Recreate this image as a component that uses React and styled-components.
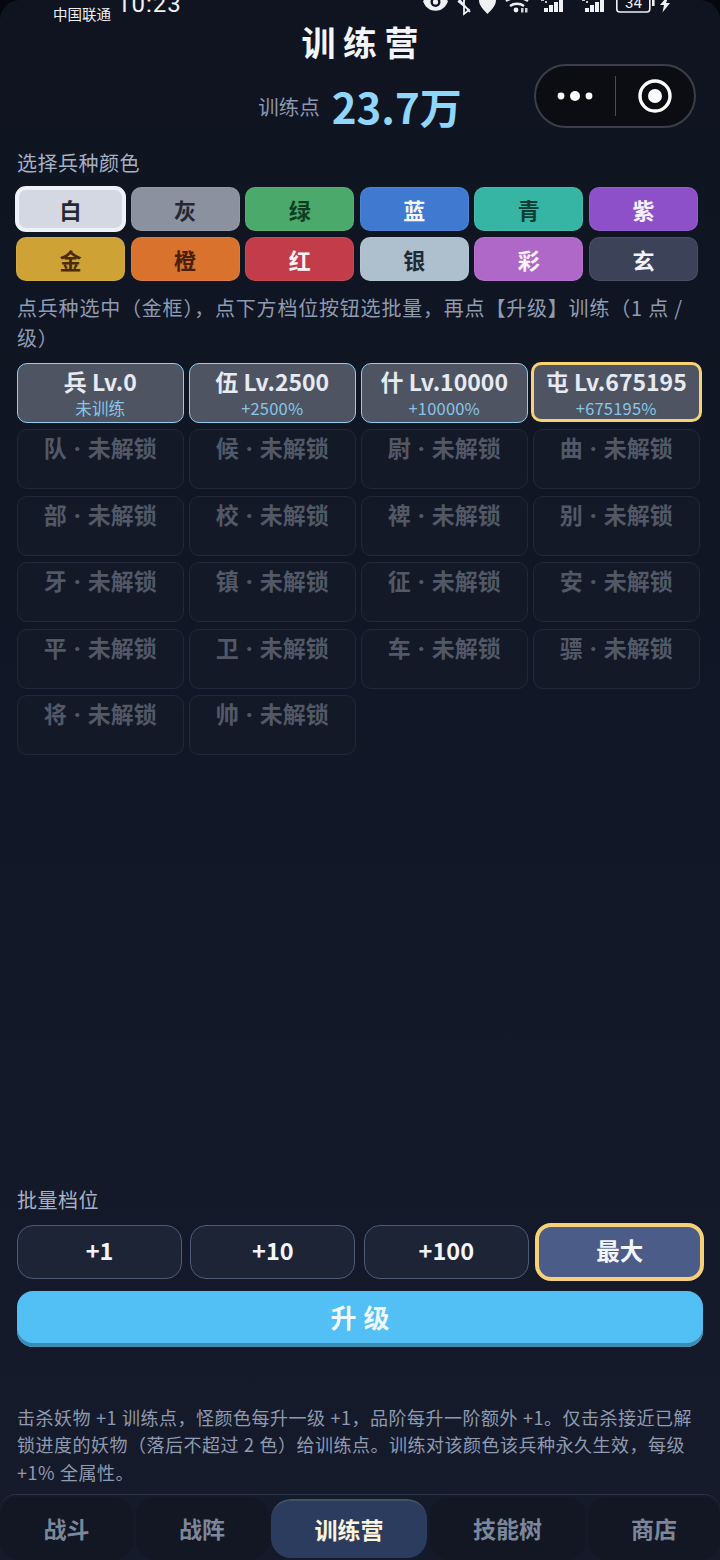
import React from 'react';
import styled, { createGlobalStyle } from 'styled-components';

const GlobalStyle = createGlobalStyle`
  html, body { margin: 0; padding: 0; background: #05070c; }
  * { box-sizing: border-box; }
  body {
    font-family: 'Noto Sans CJK SC', 'Noto Sans', sans-serif;
    text-spacing-trim: space-all;
  }
`;

const Page = styled.div`
  position: relative;
  width: 720px;
  height: 1560px;
  display: flex;
  flex-direction: column;
  overflow: hidden;
  border-radius: 20px 20px 0 0;
  background: linear-gradient(180deg, #0f1420 0%, #111726 50%, #161b2b 100%);
`;

const StatusBar = styled.div`
  height: 23px;
  flex: none;
  display: flex;
  align-items: flex-end;
  justify-content: space-between;
  padding: 0 40px 0 53px;
  overflow: hidden;
  color: #eef0f4;
`;

const StatusLeft = styled.div`
  display: flex;
  align-items: flex-end;
  gap: 6px;
  height: 23px;
`;

const Carrier = styled.span`
  font-size: 14.5px;
  line-height: 16px;
  margin-bottom: 1px;
`;

const Clock = styled.span`
  font-family: 'Roboto', sans-serif;
  font-size: 24px;
  line-height: 24px;
  margin-bottom: 7px;
  letter-spacing: 1px;
`;

const StatusIcons = styled.svg`
  display: block;
  width: 260px;
  height: 23px;
`;

const Title = styled.h1`
  margin: -1px 0 0;
  text-align: center;
  color: #f3f5f9;
  font-size: 34px;
  line-height: 40px;
  font-weight: 700;
  letter-spacing: 7.5px;
  text-indent: 7.5px;
`;

const PointsRow = styled.div`
  display: flex;
  align-items: center;
  justify-content: center;
  gap: 12px;
  height: 50px;
  margin-top: 19px;
`;

const PointsLabel = styled.span`
  font-size: 20.5px;
  color: #8b97ad;
`;

const PointsValue = styled.span`
  font-size: 42px;
  line-height: 50px;
  font-weight: 700;
  color: #8fd6fb;
`;

const Capsule = styled.div`
  position: absolute;
  left: 534px;
  top: 64px;
  width: 162px;
  height: 64px;
  display: flex;
  align-items: center;
  border-radius: 32px;
  border: 2px solid #3a3e48;
  background: #0b0d13;
`;

const CapsuleCell = styled.div`
  flex: 1;
  display: flex;
  align-items: center;
  justify-content: center;
`;

const CapsuleLine = styled.div`
  width: 1px;
  height: 40px;
  background: #4a4d55;
`;

const Main = styled.main`
  flex: 1;
  min-height: 0;
  display: flex;
  flex-direction: column;
  padding: 17px 17px 0;
`;

const SectionLabel = styled.div`
  font-size: 20px;
  line-height: 30px;
  letter-spacing: 0.5px;
  color: #a6b1c4;
`;

const ColorGrid = styled.div`
  display: grid;
  grid-template-columns: repeat(6, 109px);
  column-gap: 5.6px;
  row-gap: 6px;
  margin: 9px 0 0 -1px;
`;

const ColorChip = styled.button`
  width: ${props => (props.$active ? '111px' : '109px')};
  height: ${props => (props.$active ? '46px' : '44px')};
  margin: ${props => (props.$active ? '-1px' : '0')};
  padding: 0;
  border-radius: ${props => (props.$active ? '11px' : '10px')};
  border: ${props => (props.$active ? '4px solid #eef1fa' : '1px solid rgba(255, 255, 255, 0.08)')};
  background: ${props => props.$bg};
  color: ${props => props.$fg};
  font-family: inherit;
  font-size: 22px;
  line-height: 1;
  font-weight: 700;
`;

const Tip = styled.p`
  margin: 12px 0 0;
  font-size: 20px;
  line-height: 30px;
  letter-spacing: 0.8px;
  color: #8f9bb0;
`;

const TipTrimmed = styled.span`
  text-spacing-trim: normal;
`;

const UnitGrid = styled.div`
  display: grid;
  grid-template-columns: repeat(4, 166.5px);
  column-gap: 5.5px;
  row-gap: 6.4px;
  margin-top: 10px;
`;

const UnitCard = styled.div`
  height: 60px;
  display: flex;
  flex-direction: column;
  align-items: center;
  border-radius: 10px;
  border: ${props => (props.$selected ? '3px solid #f7d176' : props.$locked ? '1.5px solid #20283a' : '1.5px solid #8fcdee')};
  background: ${props => (props.$locked ? '#131927' : '#4e5462')};
  margin: ${props => (props.$selected ? '-1px -2px' : '0')};
  padding-top: ${props => (props.$selected ? '1px' : '2px')};
`;

const UnitName = styled.div`
  font-size: 23px;
  line-height: 30px;
  font-weight: 700;
  white-space: nowrap;
  color: ${props => (props.$locked ? '#525866' : '#e6eaf2')};
`;

const UnitDot = styled.span`
  font-family: 'Noto Sans', sans-serif;
  margin: 0 2px;
`;

const UnitSub = styled.div`
  margin-top: 2px;
  font-size: 16.5px;
  line-height: 20px;
  letter-spacing: 0.2px;
  color: #88c6e6;
`;

const Spacer = styled.div`
  flex: 1;
`;

const BatchRow = styled.div`
  display: grid;
  grid-template-columns: repeat(4, 165px);
  column-gap: 8.4px;
  margin-top: 10px;
`;

const BatchButton = styled.button`
  height: ${props => (props.$active ? '58px' : '54px')};
  padding: 0 0 3px;
  border-radius: 16px;
  font-family: inherit;
  font-size: 23.5px;
  font-weight: 700;
  color: #f2f5fa;
  border: ${props => (props.$active ? '4px solid #f7d176' : '1.5px solid #4d5b78')};
  background: ${props => (props.$active ? '#4a5c87' : '#1d2436')};
  margin: ${props => (props.$active ? '-2px' : '0')};
`;

const UpgradeButton = styled.button`
  height: 56px;
  width: 686px;
  margin-top: 12px;
  padding: 0 0 4px;
  border: 0;
  border-radius: 16px;
  font-family: inherit;
  font-size: 26px;
  font-weight: 700;
  letter-spacing: 7px;
  text-indent: 7px;
  color: #f0f9fe;
  background: #52bff5;
  box-shadow: inset 0 -4px 0 #3a8db5;
`;

const Note = styled.p`
  margin: 57px 0 0;
  font-size: 18px;
  line-height: 27.5px;
  letter-spacing: 0.5px;
  word-spacing: 0.5px;
  color: #8f9bb0;
`;

const TabBar = styled.nav`
  flex: none;
  height: 66px;
  margin-top: 8px;
  display: grid;
  grid-template-columns: 133px 133px 156px 156px 132px;
  column-gap: 2.5px;
  padding-top: 2px;
  border-top: 1px solid #2c3345;
  border-radius: 16px 16px 0 0;
  background: #141a29;
`;

const Tab = styled.div`
  height: ${props => (props.$active ? '59px' : '63px')};
  margin-top: ${props => (props.$active ? '2px' : '0')};
  padding-bottom: ${props => (props.$active ? '1px' : '2px')};
  display: flex;
  align-items: center;
  justify-content: center;
  border-radius: 20px;
  font-size: 23px;
  font-weight: 700;
  color: ${props => (props.$active ? '#fbf3dc' : '#7d879c')};
  background: ${props => (props.$active ? '#2c3c5e' : '#121723')};
  border-top: ${props => (props.$active ? '2px solid #3f5360' : '0')};
`;

const colors = [
  { name: '白', bg: '#d3d8e2', fg: '#23272f', active: true },
  { name: '灰', bg: '#8b919e', fg: '#23272f' },
  { name: '绿', bg: '#4aa96b', fg: '#0f3d22' },
  { name: '蓝', bg: '#3f7ad0', fg: '#f4f7fc' },
  { name: '青', bg: '#37b5a4', fg: '#0c3d38' },
  { name: '紫', bg: '#8e50c8', fg: '#f6f0fb' },
  { name: '金', bg: '#cfa235', fg: '#4a2c05' },
  { name: '橙', bg: '#d8722c', fg: '#4a1f05' },
  { name: '红', bg: '#c23c4a', fg: '#fdf3f3' },
  { name: '银', bg: '#aebfce', fg: '#1f2a33' },
  { name: '彩', bg: '#b068c8', fg: '#fdf6fe' },
  { name: '玄', bg: '#3c4257', fg: '#f1f2f6' },
];

const trained = [
  { name: '兵 Lv.0', sub: '未训练' },
  { name: '伍 Lv.2500', sub: '+2500%' },
  { name: '什 Lv.10000', sub: '+10000%' },
  { name: '屯 Lv.675195', sub: '+675195%', selected: true },
];

const locked = ['队', '候', '尉', '曲', '部', '校', '裨', '别', '牙', '镇', '征', '安', '平', '卫', '车', '骠', '将', '帅'];

const batches = [
  { label: '+1' },
  { label: '+10' },
  { label: '+100' },
  { label: '最大', active: true },
];

const tabs = [
  { label: '战斗' },
  { label: '战阵' },
  { label: '训练营', active: true },
  { label: '技能树' },
  { label: '商店' },
];

function SignalBars({ x }) {
  return (
    <g transform={`translate(${x} 0)`}>
      <path d="M0 -1h3v2h-3zM4 1h2v2h-2z" opacity="0.8" />
      <path d="M3 8h4v4h-4zM8 5h4v7h-4zM13 2h4v10h-4zM18 0h4v12h-4z" />
    </g>
  );
}

function SystemIcons() {
  return (
    <StatusIcons viewBox="0 0 260 23" fill="#eef0f4">
      {/* eye */}
      <path d="M3 1 C8 -4 23 -4 28 1 C24 14 7 14 3 1Z" />
      <circle cx="15.5" cy="2" r="5" fill="#0f1420" />
      <circle cx="15.5" cy="2" r="2.6" />
      {/* bluetooth with mute slash */}
      <path d="M38 1 L49 10 L44 14 L44 0 L49 -3 M38 -2 L50 12" fill="none" stroke="#eef0f4" strokeWidth="1.8" />
      {/* location */}
      <path d="M59 0 H76 C76 6 71 10 67.5 14 C64 10 59 6 59 0Z" />
      {/* wifi */}
      <path d="M86 1 C92 -3 102 -3 108 1 M90 6 C94 3 100 3 104 6" fill="none" stroke="#eef0f4" strokeWidth="2.4" />
      <circle cx="96" cy="10" r="2.4" />
      <path d="M101 8h2.5v4.5h-2.5zM105 8h2.5v4.5h-2.5z" opacity="0.85" />
      <SignalBars x={121} />
      <SignalBars x={162} />
      {/* battery */}
      <rect x="196.8" y="-6" width="33" height="18" rx="3" fill="none" stroke="#eef0f4" strokeWidth="1.6" />
      <rect x="232" y="-2" width="2.6" height="8" />
      <text x="213.5" y="8" fontSize="15" textAnchor="middle" fontFamily="Roboto, sans-serif">34</text>
      {/* charging */}
      <path d="M246 -2 L240 5 H244 L242.5 12.5 L250 3 H246 L248 -2Z" />
    </StatusIcons>
  );
}

export default function App() {
  return (
    <Page>
      <GlobalStyle />
      <StatusBar>
        <StatusLeft>
          <Carrier>中国联通</Carrier>
          <Clock>10:23</Clock>
        </StatusLeft>
        <SystemIcons />
      </StatusBar>
      <Title>训练营</Title>
      <PointsRow>
        <PointsLabel>训练点</PointsLabel>
        <PointsValue>23.7万</PointsValue>
      </PointsRow>
      <Capsule>
        <CapsuleCell>
          <svg width="36" height="12" viewBox="0 0 36 12" fill="#fff">
            <circle cx="4" cy="6" r="3.4" />
            <circle cx="18" cy="6" r="5" />
            <circle cx="32" cy="6" r="3.4" />
          </svg>
        </CapsuleCell>
        <CapsuleLine />
        <CapsuleCell>
          <svg width="36" height="36" viewBox="0 0 36 36">
            <circle cx="18" cy="18" r="15" fill="none" stroke="#fff" strokeWidth="3.4" />
            <circle cx="18" cy="18" r="7" fill="#fff" />
          </svg>
        </CapsuleCell>
      </Capsule>
      <Main>
        <SectionLabel>选择兵种颜色</SectionLabel>
        <ColorGrid>
          {colors.map(c => (
            <ColorChip key={c.name} $bg={c.bg} $fg={c.fg} $active={c.active}>{c.name}</ColorChip>
          ))}
        </ColorGrid>
        <Tip><TipTrimmed>点兵种选中（金框），</TipTrimmed>点下方档位按钮选批量，再点【升级】训练（1 点 / 级）</Tip>
        <UnitGrid>
          {trained.map(u => (
            <UnitCard key={u.name} $selected={u.selected}>
              <UnitName>{u.name}</UnitName>
              <UnitSub>{u.sub}</UnitSub>
            </UnitCard>
          ))}
          {locked.map(name => (
            <UnitCard key={name} $locked>
              <UnitName $locked>{name} <UnitDot>·</UnitDot> 未解锁</UnitName>
            </UnitCard>
          ))}
        </UnitGrid>
        <Spacer />
        <SectionLabel>批量档位</SectionLabel>
        <BatchRow>
          {batches.map(b => (
            <BatchButton key={b.label} $active={b.active}>{b.label}</BatchButton>
          ))}
        </BatchRow>
        <UpgradeButton>升级</UpgradeButton>
        <Note>击杀妖物 +1 训练点，怪颜色每升一级 +1，品阶每升一阶额外 +1。仅击杀接近已解锁进度的妖物（落后不超过 2 色）给训练点。训练对该颜色该兵种永久生效，每级 +1% 全属性。</Note>
      </Main>
      <TabBar>
        {tabs.map(t => (
          <Tab key={t.label} $active={t.active}>{t.label}</Tab>
        ))}
      </TabBar>
    </Page>
  );
}
